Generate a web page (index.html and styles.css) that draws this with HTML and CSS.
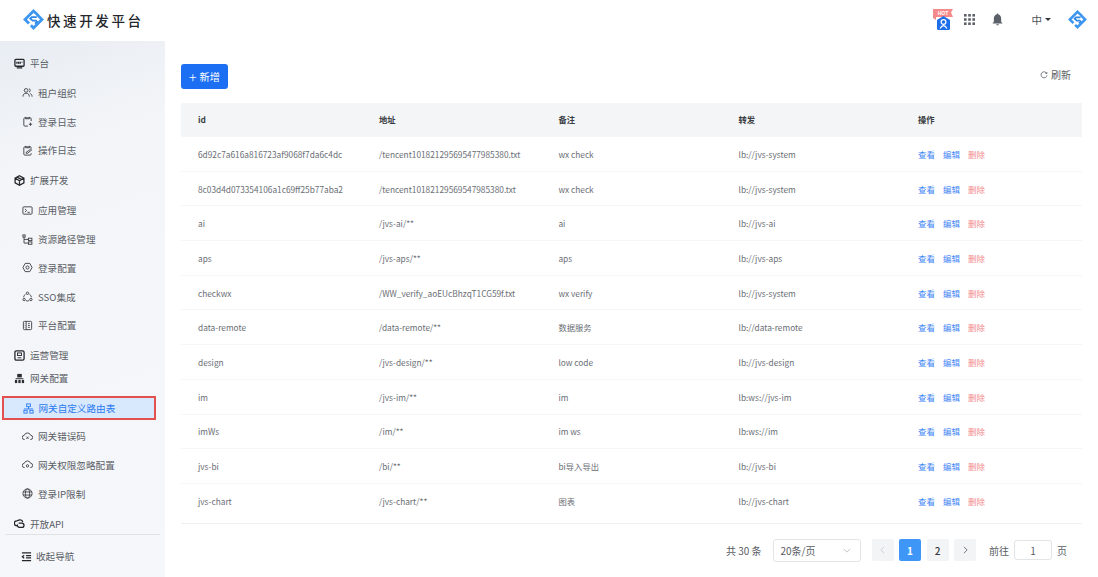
FILE: index.html
```html
<!DOCTYPE html>
<html lang="zh">
<head>
<meta charset="utf-8">
<title>快速开发平台</title>
<link rel="stylesheet" href="styles.css">
</head>
<body>
<svg class="defs" width="0" height="0" aria-hidden="true">
  <symbol id="logo" viewBox="0 0 24 24">
    <path d="M17.500 7.500L12 2.300 2.300 12l4.600 4.600" fill="none" stroke="#3d97f0" stroke-width="3.200"/>
    <path d="M16.500 6.700L21.700 12 12 21.700 9 18.700" fill="none" stroke="#3d97f0" stroke-width="3.200"/>
    <path d="M15.800 9.300H10L8.300 11 11.200 13.400H14.800L16 14.600 13.800 16.800" fill="none" stroke="#2b86e6" stroke-width="2"/>
  </symbol>
</svg>
<header class="topbar">
  <div class="brand">
    <svg class="brand-logo"><use href="#logo"/></svg>
    <span class="brand-name">快速开发平台</span>
  </div>
  <div class="top-actions">
    <div class="hot-badge">
      <svg viewBox="0 0 20 22" width="20" height="22">
        <path d="M0 0 H20 L18 3.500 L20 8 H3 L3 11 L0 9 Z" fill="#f58a8a"/>
        <text x="10" y="6" class="hot-text" text-anchor="middle">HOT</text>
        <path d="M10.500 7 L17 11 V19.500 Q17 21 15.500 21 H5.500 Q4 21 4 19.500 V11 Z" fill="#1c6eea"/>
        <circle cx="10.500" cy="13" r="2.400" fill="none" stroke="#fff" stroke-width="1.200"/>
        <path d="M7 19.500 Q10.500 13.600 14 19.500" fill="none" stroke="#fff" stroke-width="1.200"/>
      </svg>
    </div>
    <svg class="top-grid" viewBox="0 0 11 11" width="11" height="11" fill="#5c6068">
      <rect x="0" y="0" width="2.600" height="2.600"/><rect x="4.200" y="0" width="2.600" height="2.600"/><rect x="8.400" y="0" width="2.600" height="2.600"/>
      <rect x="0" y="4.200" width="2.600" height="2.600"/><rect x="4.200" y="4.200" width="2.600" height="2.600"/><rect x="8.400" y="4.200" width="2.600" height="2.600"/>
      <rect x="0" y="8.400" width="2.600" height="2.600"/><rect x="4.200" y="8.400" width="2.600" height="2.600"/><rect x="8.400" y="8.400" width="2.600" height="2.600"/>
    </svg>
    <svg class="top-bell" viewBox="0 0 12 14" width="11" height="13" fill="#5c6068">
      <path d="M6 .5 C6.600 .5 7 1 7 1.600 C9 2.200 10 4 10 6 V9.500 L11.500 11.400 H.5 L2 9.500 V6 C2 4 3 2.200 5 1.600 C5 1 5.400 .5 6 .5 Z"/>
      <path d="M4.500 12.200 H7.500 C7.400 13 6.800 13.500 6 13.500 C5.200 13.500 4.600 13 4.500 12.200 Z"/>
    </svg>
    <div class="lang">中<i class="caret"></i></div>
    <svg class="top-logo"><use href="#logo"/></svg>
  </div>
</header>
<div class="body">
  <aside class="sidebar">
    <nav class="nav">
      <div class="nav-head">
        <svg class="ico ico-strong" viewBox="0 0 12 12"><rect x="1" y="1.500" width="10" height="7.500" rx="1"/><path d="M3.200 4v2.200M5 4v2.200M6.800 4v2.200M8.800 4v1M3 10.700h6"/></svg>
        <span>平台</span>
      </div>
      <ul class="nav-sub">
        <li class="nav-item"><svg class="ico" viewBox="0 0 12 12"><circle cx="4.500" cy="3.700" r="2"/><path d="M1 10.500c0-2.400 1.500-3.700 3.500-3.700S8 8.100 8 10.500M7.600 1.800a2 2 0 0 1 0 3.800M9 7.200c1.300.5 2 1.700 2 3.300"/></svg><span>租户组织</span></li>
        <li class="nav-item"><svg class="ico" viewBox="0 0 12 12"><path d="M10 5.500V3a1 1 0 0 0-1-1H3a1 1 0 0 0-1 1v7a1 1 0 0 0 1 1h3.500M4 1v2h4V1M7.500 9h3.500M9.200 7.200V10.800"/></svg><span>登录日志</span></li>
        <li class="nav-item"><svg class="ico" viewBox="0 0 12 12"><path d="M10 4V3a1 1 0 0 0-1-1H3a1 1 0 0 0-1 1v7a1 1 0 0 0 1 1h6a1 1 0 0 0 1-1V9M4 1v2h4V1M4.500 8l5-3.500 1 1-4.500 3.500H4.500z"/></svg><span>操作日志</span></li>
      </ul>
      <div class="nav-head">
        <svg class="ico ico-strong" viewBox="0 0 12 12"><path d="M6 .8l4.800 2.600v5.200L6 11.200 1.200 8.600V3.400zM1.500 3.600L6 6.200l4.500-2.600M6 6.200v4.800M3.500 2.300L8.500 5"/></svg>
        <span>扩展开发</span>
      </div>
      <ul class="nav-sub">
        <li class="nav-item"><svg class="ico" viewBox="0 0 12 12"><rect x="1" y="2" width="10" height="8" rx="1"/><path d="M3.200 4.300L5 6 3.200 7.700M6 8h2.500"/></svg><span>应用管理</span></li>
        <li class="nav-item"><svg class="ico" viewBox="0 0 12 12"><rect x="1" y="1" width="2.400" height="2.400"/><rect x="7" y="4.600" width="3.800" height="2.600"/><rect x="7" y="8.600" width="3.800" height="2.600"/><path d="M2.200 3.400V9.900H7M2.200 5.900H7"/></svg><span>资源路径管理</span></li>
        <li class="nav-item"><svg class="ico" viewBox="0 0 12 12"><path d="M3.500 1.500h5L11 6 8.500 10.500h-5L1 6z"/><circle cx="6" cy="6" r="1.700"/></svg><span>登录配置</span></li>
        <li class="nav-item"><svg class="ico" viewBox="0 0 12 12"><circle cx="6" cy="2.500" r="1.300"/><circle cx="2.300" cy="9.300" r="1.300"/><circle cx="9.700" cy="9.300" r="1.300"/><path d="M3.900 3.500A4.500 4.500 0 0 0 1.700 6.800M8.100 3.500A4.500 4.500 0 0 1 10.300 6.800M4.200 10.500A4.500 4.500 0 0 0 7.800 10.500"/></svg><span>SSO集成</span></li>
        <li class="nav-item"><svg class="ico" viewBox="0 0 12 12"><rect x="1.500" y="1.500" width="9" height="9" rx="1"/><path d="M4.500 1.500v9M6.500 4h2M6.500 6h2M6.500 8h2M3 4h.5M3 6h.5M3 8h.5"/></svg><span>平台配置</span></li>
      </ul>
      <div class="nav-head">
        <svg class="ico ico-strong" viewBox="0 0 12 12"><rect x="1" y="1" width="10" height="10" rx="1.500"/><rect x="3.800" y="3.200" width="4.400" height="2.800" stroke-width="1"/><path d="M4 8.500h4" stroke-width="1"/></svg>
        <span>运营管理</span>
      </div>
      <div class="nav-head">
        <svg class="ico ico-fill" viewBox="0 0 12 12"><rect x="3.500" y="1" width="5" height="3.800"/><rect x="1" y="7.500" width="2.500" height="3.500"/><rect x="4.750" y="7.500" width="2.500" height="3.500"/><rect x="8.500" y="7.500" width="2.500" height="3.500"/><rect x="1.800" y="5.700" width="8.400" height="1"/></svg>
        <span>网关配置</span>
      </div>
      <ul class="nav-sub">
        <li class="nav-item nav-item-active"><svg class="ico" viewBox="0 0 12 12"><rect x="4" y="1" width="4" height="3"/><rect x="1" y="8" width="3.500" height="3"/><rect x="7.500" y="8" width="3.500" height="3"/><path d="M6 4v2.500M1 6.500h10"/></svg><span>网关自定义路由表</span></li>
        <li class="nav-item"><svg class="ico" viewBox="0 0 12 12"><path d="M3 9.300H2.700A2.300 2.300 0 0 1 2.500 4.700 3.600 3.600 0 0 1 9.400 4.700 2.300 2.300 0 0 1 9.300 9.300H9M4.800 6.200l2.400 2.400M7.200 6.200L4.800 8.600"/></svg><span>网关错误码</span></li>
        <li class="nav-item"><svg class="ico" viewBox="0 0 12 12"><path d="M3 9.300H2.700A2.300 2.300 0 0 1 2.500 4.700 3.600 3.600 0 0 1 9.400 4.700 2.300 2.300 0 0 1 9.300 9.300H9"/><circle cx="6" cy="7.500" r="1.300"/></svg><span>网关权限忽略配置</span></li>
        <li class="nav-item"><svg class="ico" viewBox="0 0 12 12"><circle cx="6" cy="6" r="5"/><ellipse cx="6" cy="6" rx="2.300" ry="5"/><path d="M1.200 4.300h9.600M1.200 7.700h9.600"/></svg><span>登录IP限制</span></li>
      </ul>
      <div class="nav-head">
        <svg class="ico ico-strong" viewBox="0 0 12 12"><path d="M3.500 8.500H3A2.500 2.500 0 0 1 3 3.200L6 2a3 3 0 0 1 3.500 2.500M5 5.500h3.500a2.300 2.300 0 0 1 0 4.800H6A2.500 2.500 0 0 1 3.800 7"/></svg>
        <span>开放API</span>
      </div>
    </nav>
    <div class="collapse">
      <svg class="ico ico-strong" viewBox="0 0 12 12"><path d="M1 2h10M5.500 5h5.500M5.500 7.500h5.500M1 10.500h10M3.500 4.500L1.500 6.200l2 1.700"/></svg>
      <span>收起导航</span>
    </div>
  </aside>
  <main class="main">
    <div class="toolbar">
      <button class="btn-primary" type="button"><span class="plus">+</span>新增</button>
      <div class="refresh">
        <svg class="refresh-ico" viewBox="0 0 12 12"><path d="M10 3.500A4.500 4.500 0 1 0 10.500 6.500M10.300 1.500V3.800H8"/></svg>
        <span>刷新</span>
      </div>
    </div>
    <table class="grid">
      <thead>
        <tr><th>id</th><th>地址</th><th>备注</th><th>转发</th><th>操作</th></tr>
      </thead>
      <tbody>
        <tr><td>6d92c7a616a816723af9068f7da6c4dc</td><td>/tencent101821295695477985380.txt</td><td>wx check</td><td>lb://jvs-system</td><td class="ops"><a>查看</a><a>编辑</a><a class="del">删除</a></td></tr>
        <tr><td>8c03d4d073354106a1c69ff25b77aba2</td><td>/tencent10182129569547985380.txt</td><td>wx check</td><td>lb://jvs-system</td><td class="ops"><a>查看</a><a>编辑</a><a class="del">删除</a></td></tr>
        <tr><td>ai</td><td>/jvs-ai/**</td><td>ai</td><td>lb://jvs-ai</td><td class="ops"><a>查看</a><a>编辑</a><a class="del">删除</a></td></tr>
        <tr><td>aps</td><td>/jvs-aps/**</td><td>aps</td><td>lb://jvs-aps</td><td class="ops"><a>查看</a><a>编辑</a><a class="del">删除</a></td></tr>
        <tr><td>checkwx</td><td>/WW_verify_aoEUcBhzqT1CG59f.txt</td><td>wx verify</td><td>lb://jvs-system</td><td class="ops"><a>查看</a><a>编辑</a><a class="del">删除</a></td></tr>
        <tr><td>data-remote</td><td>/data-remote/**</td><td>数据服务</td><td>lb://data-remote</td><td class="ops"><a>查看</a><a>编辑</a><a class="del">删除</a></td></tr>
        <tr><td>design</td><td>/jvs-design/**</td><td>low code</td><td>lb://jvs-design</td><td class="ops"><a>查看</a><a>编辑</a><a class="del">删除</a></td></tr>
        <tr><td>im</td><td>/jvs-im/**</td><td>im</td><td>lb:ws://jvs-im</td><td class="ops"><a>查看</a><a>编辑</a><a class="del">删除</a></td></tr>
        <tr><td>imWs</td><td>/im/**</td><td>im ws</td><td>lb:ws://im</td><td class="ops"><a>查看</a><a>编辑</a><a class="del">删除</a></td></tr>
        <tr><td>jvs-bi</td><td>/bi/**</td><td>bi导入导出</td><td>lb://jvs-bi</td><td class="ops"><a>查看</a><a>编辑</a><a class="del">删除</a></td></tr>
        <tr class="last"><td>jvs-chart</td><td>/jvs-chart/**</td><td>图表</td><td>lb://jvs-chart</td><td class="ops"><a>查看</a><a>编辑</a><a class="del">删除</a></td></tr>
      </tbody>
    </table>
    <div class="pager">
      <span class="total">共 30 条</span>
      <div class="size-select"><span>20条/页</span><svg class="chev" viewBox="0 0 10 6"><path d="M1 1l4 4 4-4"/></svg></div>
      <div class="pages">
        <span class="page page-disabled"><svg class="chev-side" viewBox="0 0 6 10"><path d="M5 1L1 5l4 4"/></svg></span>
        <span class="page page-on">1</span>
        <span class="page">2</span>
        <span class="page"><svg class="chev-side" viewBox="0 0 6 10"><path d="M1 1l4 4-4 4"/></svg></span>
      </div>
      <div class="jump"><span>前往</span><span class="jump-box">1</span><span>页</span></div>
    </div>
  </main>
</div>
</body>
</html>
```
FILE: styles.css
```css
* { box-sizing: border-box; }
html, body { margin: 0; height: 100%; }
body {
  width: 1098px;
  height: 577px;
  overflow: hidden;
  background: #fff;
  color: #4e5258;
  font-family: "Noto Sans CJK SC", "Noto Sans", sans-serif;
  display: flex;
  flex-direction: column;
}
.defs { position: absolute; }
ul { list-style: none; margin: 0; padding: 0; }

.topbar {
  height: 41px;
  flex: none;
  display: flex;
  align-items: center;
  justify-content: space-between;
  padding: 0 11px 2px 23px;
}
.brand { display: flex; align-items: center; gap: 3px; }
.brand-logo { width: 21px; height: 21px; }
.brand-name {
  font-size: 13.500px;
  font-weight: 500;
  letter-spacing: 2.600px;
  color: #23262b;
}
.top-actions { display: flex; align-items: center; }
.hot-badge { width: 20px; height: 22px; margin-right: 11px; }
.hot-badge svg { display: block; }
.hot-text { font-size: 5px; font-weight: 700; fill: #fff; font-family: "Liberation Sans", sans-serif; }
.top-grid { margin-right: 17px; }
.top-bell { margin-right: 29px; }
.lang { display: flex; align-items: center; gap: 3px; font-size: 10.500px; color: #4e5258; margin-right: 17px; }
.caret { width: 0; height: 0; border: 3px solid transparent; border-top: 3.500px solid #33363b; border-bottom: 0; }
.top-logo { width: 19px; height: 19px; }

.body { flex: 1; display: flex; min-height: 0; }

.sidebar {
  width: 165px;
  flex: none;
  display: flex;
  flex-direction: column;
  background: linear-gradient(160deg, #e8edf3 0%, #f3f5f8 22%, #f6f7fb 100%);
  font-size: 9.600px;
  color: #5a5e65;
}
.nav { flex: 1; min-height: 0; overflow: hidden; padding-top: 10.500px; }
.nav-head {
  height: 23px;
  display: flex;
  align-items: center;
  gap: 5px;
  padding-left: 14px;
}
.nav-sub { padding: 4px 0; }
.nav-item {
  height: 28.800px;
  display: flex;
  align-items: center;
  gap: 5px;
  padding-left: 22px;
}
.nav-item-active {
  margin: 2.400px 9px 1.400px 2px;
  padding-left: 18.500px;
  height: 24px;
  background: #d8e8fd;
  border: 2px solid #e2504f;
  color: #2b7bf0;
}
.nav-item-active .ico { stroke: #2b7bf0; }
.ico {
  width: 11px;
  height: 11px;
  flex: none;
  fill: none;
  stroke: #3c4046;
  stroke-width: 1;
}
.ico-strong { stroke: #23262b; stroke-width: 1.400; }
.ico-fill { fill: #2b2e33; stroke: none; }
.collapse {
  height: 43px;
  flex: none;
  margin: 0 5px 0 6px;
  border-top: 1px solid #dfe1e5;
  display: flex;
  align-items: center;
  gap: 4px;
  padding-left: 15px;
}

.main { flex: 1; min-width: 0; padding: 23px 16px 0; display: flex; flex-direction: column; }
.toolbar { height: 25px; display: flex; align-items: center; justify-content: space-between; margin-bottom: 14px; }
.btn-primary {
  width: 47px;
  height: 25px;
  padding: 0;
  border: 0;
  border-radius: 3px;
  background: #1c6ef2;
  color: #fff;
  font: inherit;
  font-size: 10.200px;
  display: flex;
  align-items: center;
  justify-content: center;
  gap: 3px;
}
.plus { font-size: 14px; font-weight: 300; line-height: 1; }
.refresh { display: flex; align-items: center; gap: 3px; font-size: 10px; color: #5a5e65; margin: 0 11px 4px 0; }
.refresh-ico { width: 8px; height: 8px; fill: none; stroke: #4e5258; stroke-width: 1.100; }

.grid { width: 901px; border-collapse: collapse; table-layout: fixed; font-size: 8.300px; color: #6a6e75; }
.grid th {
  height: 33.500px;
  background: #f3f5f7;
  text-align: left;
  font-weight: 700;
  color: #3a3d42;
  padding: 0 0 2px 17px;
  font-size: 8.300px;
}
.grid td { height: 34.700px; padding: 0 0 0 17px; border-bottom: 1px solid #f5f6f8; }
.grid .last td { height: 39.700px; padding-bottom: 5px; border-bottom-color: #eff0f3; }
.grid th:first-child { border-radius: 2px 0 0 2px; }
.grid th:nth-child(2), .grid td:nth-child(2) { padding-left: 17.800px; }
.grid th:last-child, .grid td:last-child { padding-left: 16.300px; }
.ops a { color: #3f86f5; margin-right: 8px; font-size: 8.500px; }
.ops .del { color: #f28b8b; margin-right: 0; }

.pager {
  margin-top: 15px;
  display: flex;
  align-items: center;
  justify-content: flex-end;
  font-size: 10px;
  color: #5a5e65;
  padding-right: 15px;
}
.total { margin-right: 11px; }
.size-select {
  width: 88px;
  height: 23px;
  border: 1px solid #e2e4e8;
  border-radius: 3px;
  display: flex;
  align-items: center;
  justify-content: space-between;
  padding: 0 9px 0 7px;
  margin-right: 11px;
}
.chev { width: 8px; height: 5px; fill: none; stroke: #b5b8be; stroke-width: 1; }
.chev-side { width: 5px; height: 8px; fill: none; stroke: #565a60; stroke-width: 1; }
.pages { display: flex; gap: 5.500px; margin-right: 13px; }
.page {
  width: 22px;
  height: 22px;
  border-radius: 2px;
  background: #f3f4f6;
  display: flex;
  align-items: center;
  justify-content: center;
  font-weight: 500;
  color: #33363b;
}
.page-disabled .chev-side { stroke: #c3c6cc; }
.page-on { background: #3e96f7; color: #fff; font-weight: 700; }
.jump { display: flex; align-items: center; gap: 5px; }
.jump-box {
  width: 38px;
  height: 20px;
  border: 1px solid #e2e4e8;
  border-radius: 3px;
  display: flex;
  align-items: center;
  justify-content: center;
}
```
